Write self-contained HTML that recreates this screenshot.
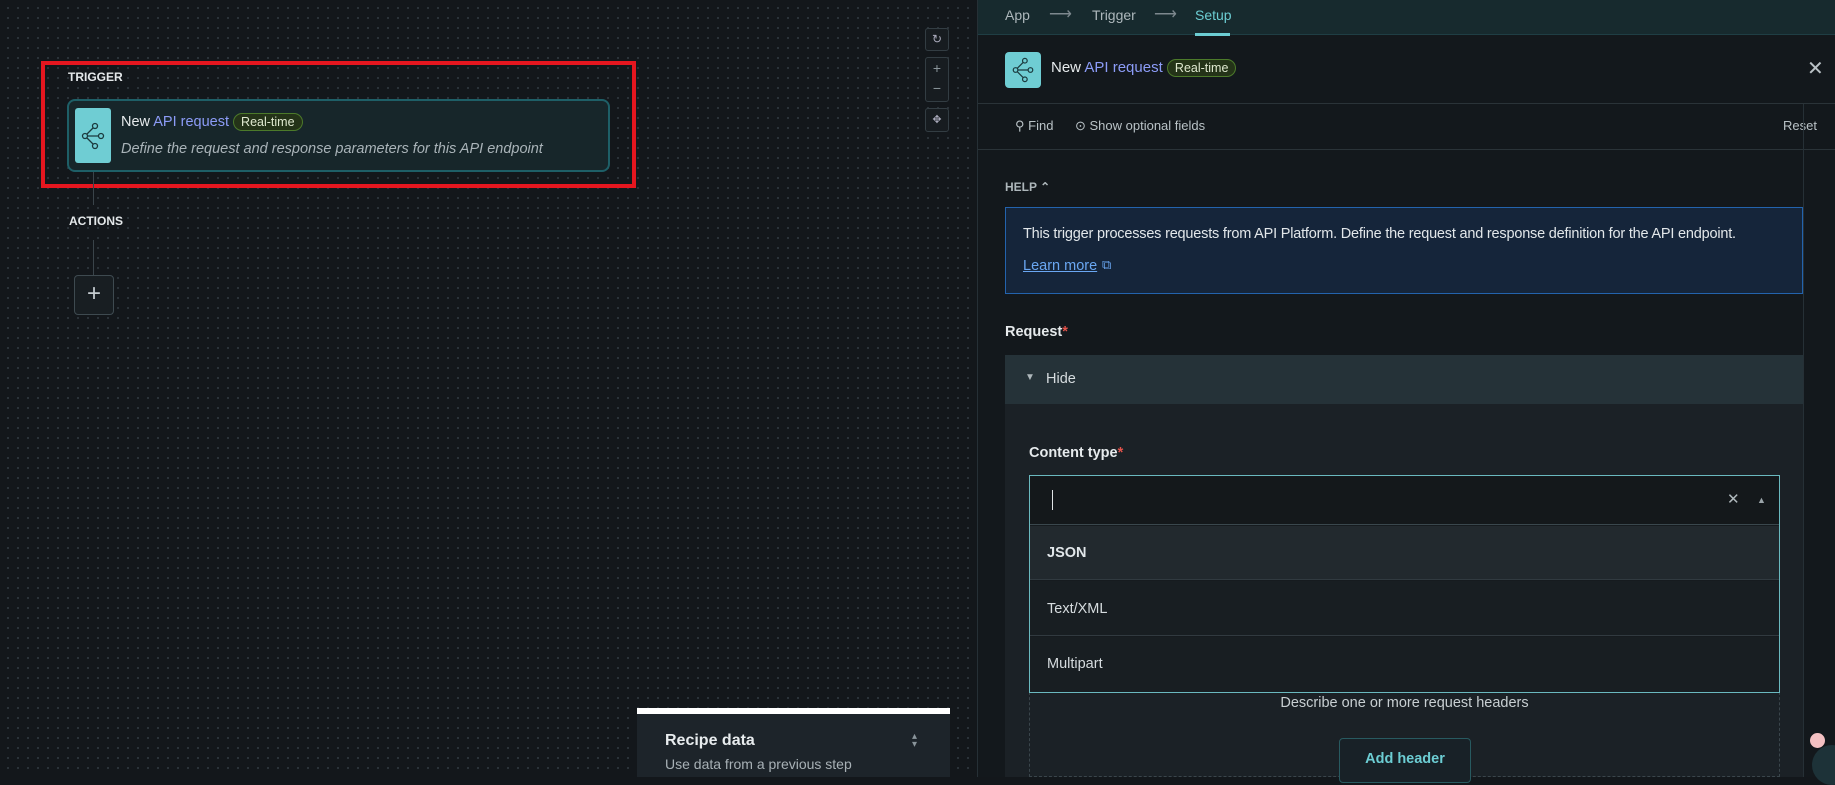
<!DOCTYPE html>
<html><head><meta charset="utf-8"><style>
*{box-sizing:border-box;margin:0;padding:0}
body{width:1835px;height:777px;overflow:hidden;background:#13171b;font-family:"Liberation Sans",sans-serif;color:#d5dadd;position:relative;font-size:14px}
.abs{position:absolute}
#canvas{left:0;top:0;width:977px;height:777px;background-color:#13171b;background-image:radial-gradient(circle,#2c343b 1px,transparent 1.2px);background-size:10px 10px;background-position:3px 3px}
.lbl{font-size:12px;font-weight:bold;color:#e4e8ea}
#panel{left:977px;top:0;width:858px;height:777px;background:#13181c;border-left:1px solid #263036}
.badge{display:inline-block;border:1px solid #4c7a2a;background:#243318;color:#dfe8cf;border-radius:10px;font-size:12.5px;padding:1px 7px;vertical-align:middle}
</style></head><body>
<div id="canvas" class="abs"></div>
<!-- red box -->
<div class="abs" style="left:41px;top:61px;width:595px;height:127px;border:4px solid #e5161f"></div>
<div class="abs lbl" style="left:68px;top:70px">TRIGGER</div>
<div class="abs" style="left:67px;top:99px;width:543px;height:73px;border:2px solid #1e5f67;background:#17262a;border-radius:8px"></div>
<div class="abs" style="left:75px;top:108px;width:36px;height:55px;background:#6fcdd3;border-radius:3px"></div>
<svg class="abs" style="left:80px;top:122px" width="26" height="28" viewBox="0 0 26 28"><g fill="none" stroke="#1b3a3e" stroke-width="1.3"><circle cx="15" cy="4" r="2.5"/><circle cx="5" cy="14" r="2.5"/><circle cx="21" cy="14" r="2.5"/><circle cx="15" cy="24" r="2.5"/><path d="M13 6L7 12M7 14H19M7 16L13 22"/></g></svg>
<div class="abs" style="left:121px;top:113px;font-size:14.5px;color:#e6eaec">New <span style="color:#8c9cf7">API request</span> <span class="badge">Real-time</span></div>
<div class="abs" style="left:121px;top:141px;font-size:14.5px;font-style:italic;color:#a9b3b8">Define the request and response parameters for this API endpoint</div>
<div class="abs" style="left:93px;top:172px;width:1px;height:33px;background:#3a444a"></div>
<div class="abs lbl" style="left:69px;top:214px">ACTIONS</div>
<div class="abs" style="left:93px;top:240px;width:1px;height:35px;background:#3a444a"></div>
<div class="abs" style="left:74px;top:275px;width:40px;height:40px;border:1px solid #3e4a50;border-radius:4px;background:#181e22;color:#c5ccd0;font-size:24px;text-align:center;line-height:36px">+</div>
<!-- controls -->
<div class="abs" style="left:925px;top:28px;width:24px;height:23px;border:1px solid #333d43;border-radius:3px;background:#171c20;color:#aab;font-size:12px;text-align:center;line-height:21px">↻</div>
<div class="abs" style="left:925px;top:57px;width:24px;height:45px;border:1px solid #333d43;border-radius:3px;background:#171c20;color:#8a959b;font-size:14px;text-align:center;line-height:20px">+<br>−</div>
<div class="abs" style="left:925px;top:108px;width:24px;height:24px;border:1px solid #333d43;border-radius:3px;background:#171c20;color:#aab;font-size:11px;text-align:center;line-height:22px">✥</div>
<!-- recipe data -->
<div class="abs" style="left:637px;top:708px;width:313px;height:69px;background:#1d242a;border-top:6px solid #fff"></div>
<div class="abs" style="left:665px;top:732px;font-size:16px;font-weight:bold;color:#e8ecee">Recipe data</div>
<div class="abs" style="left:665px;top:756px;font-size:14px;color:#a8b1b6">Use data from a previous step</div>
<div class="abs" style="left:912px;top:733px;font-size:10px;color:#8a959b;line-height:8px">▴<br>▾</div>

<div id="panel" class="abs"></div>
<!-- tabs -->
<div class="abs" style="left:978px;top:0;width:857px;height:35px;background:#172a2e;border-bottom:1px solid #1f3e44"></div>
<div class="abs" style="left:1005px;top:7px;font-size:14px;color:#aeb8bc">App</div>
<div class="abs" style="left:1049px;top:4px;font-size:16px;color:#7d888e">⟶</div>
<div class="abs" style="left:1092px;top:7px;font-size:14px;color:#aeb8bc">Trigger</div>
<div class="abs" style="left:1154px;top:4px;font-size:16px;color:#7d888e">⟶</div>
<div class="abs" style="left:1195px;top:7px;font-size:14px;color:#6ccdd3">Setup</div>
<div class="abs" style="left:1195px;top:33px;width:35px;height:3px;background:#6ccdd3"></div>
<!-- header -->
<div class="abs" style="left:1005px;top:52px;width:36px;height:36px;background:#6fcdd3;border-radius:4px"></div>
<svg class="abs" style="left:1010px;top:57px" width="26" height="26" viewBox="0 0 26 28"><g fill="none" stroke="#1b3a3e" stroke-width="1.3"><circle cx="15" cy="4" r="2.5"/><circle cx="5" cy="14" r="2.5"/><circle cx="21" cy="14" r="2.5"/><circle cx="15" cy="24" r="2.5"/><path d="M13 6L7 12M7 14H19M7 16L13 22"/></g></svg>
<div class="abs" style="left:1051px;top:59px;font-size:15px;color:#e6eaec">New <span style="color:#8c9cf7">API request</span> <span class="badge">Real-time</span></div>
<div class="abs" style="left:1807px;top:56px;font-size:20px;color:#b9c1c5">✕</div>
<div class="abs" style="left:978px;top:103px;width:857px;height:1px;background:#2a3338"></div>
<div class="abs" style="left:1015px;top:118px;font-size:13px;color:#b9c2c6">⚲ Find</div>
<div class="abs" style="left:1075px;top:118px;font-size:13px;color:#b9c2c6">⊙ Show optional fields</div>
<div class="abs" style="left:1783px;top:118px;font-size:13px;color:#b9c2c6">Reset</div>
<div class="abs" style="left:978px;top:149px;width:857px;height:1px;background:#2a3338"></div>
<div class="abs" style="left:1005px;top:180px;font-size:12px;font-weight:bold;color:#aeb7bb">HELP ⌃</div>
<div class="abs" style="left:1005px;top:207px;width:798px;height:87px;background:#15253a;border:1px solid #2363ad"></div>
<div class="abs" style="left:1023px;top:226px;font-size:14.5px;color:#e2e7ea;letter-spacing:-0.2px">This trigger processes requests from API Platform. Define the request and response definition for the API endpoint.</div>
<div class="abs" style="left:1023px;top:258px;font-size:14.5px;color:#6aa7f2;text-decoration:underline">Learn more</div>
<div class="abs" style="left:1102px;top:257px;font-size:13px;color:#6aa7f2">⧉</div>
<div class="abs" style="left:1005px;top:324px;font-size:14.5px;font-weight:bold;color:#e6eaec">Request<span style="color:#e5534b">*</span></div>
<!-- section -->
<div class="abs" style="left:1005px;top:355px;width:798px;height:422px;background:#1b2126"></div>
<div class="abs" style="left:1005px;top:355px;width:798px;height:49px;background:#253238"></div>
<div class="abs" style="left:1025px;top:372px;font-size:10px;color:#aeb7bb">▼</div>
<div class="abs" style="left:1046px;top:371px;font-size:14.5px;color:#d6dcdf">Hide</div>
<div class="abs" style="left:1029px;top:445px;font-size:14.5px;font-weight:bold;color:#e6eaec">Content type<span style="color:#e5534b">*</span></div>
<div class="abs" style="left:1029px;top:692px;width:751px;height:85px;border:1px dashed #3a454b;border-top:none"></div>
<div class="abs" style="left:1029px;top:695px;width:751px;text-align:center;font-size:14.5px;color:#c8cfd2">Describe one or more request headers</div>
<div class="abs" style="left:1339px;top:738px;width:132px;height:45px;border:1px solid #285a60;border-radius:4px;background:#182127;color:#6ccdd3;font-weight:bold;font-size:14.5px;text-align:center;line-height:41px">Add header</div>
<div class="abs" style="left:1029px;top:475px;width:751px;height:218px;border:1px solid #6ab9bf;background:#161b1f"></div>
<div class="abs" style="left:1030px;top:476px;width:749px;height:49px;background:#14181b;border-bottom:1px solid #3a474d"></div>
<div class="abs" style="left:1052px;top:490px;width:1px;height:20px;background:#e0e4e6"></div>
<div class="abs" style="left:1727px;top:490px;font-size:15px;color:#b0b9bd">✕</div>
<div class="abs" style="left:1757px;top:495px;font-size:9px;color:#9aa4a9">▲</div>
<div class="abs" style="left:1030px;top:526px;width:749px;height:54px;background:#22292e;border-bottom:1px solid #313a40"></div>
<div class="abs" style="left:1047px;top:545px;font-size:14.5px;font-weight:bold;color:#e2e7ea">JSON</div>
<div class="abs" style="left:1030px;top:581px;width:749px;height:55px;background:#181e22;border-bottom:1px solid #313a40"></div>
<div class="abs" style="left:1047px;top:601px;font-size:14.5px;color:#d6dcdf">Text/XML</div>
<div class="abs" style="left:1030px;top:637px;width:749px;height:55px;background:#181e22"></div>
<div class="abs" style="left:1047px;top:656px;font-size:14.5px;color:#d6dcdf">Multipart</div>
<!-- right strip -->
<div class="abs" style="left:1803px;top:104px;width:1px;height:673px;background:#263036"></div>
<div class="abs" style="left:1810px;top:733px;width:15px;height:15px;border-radius:50%;background:#f3c0c2"></div>
<div class="abs" style="left:1812px;top:745px;width:40px;height:40px;border-radius:50%;background:#1d3238"></div>
</body></html>
